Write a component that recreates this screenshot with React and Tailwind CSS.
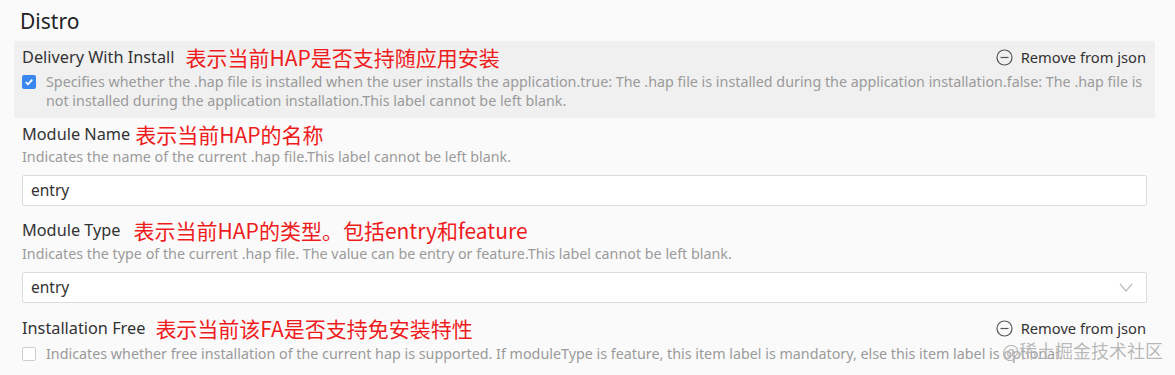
import React from 'react';

const font = { fontFamily: '"Noto Sans", "Noto Sans CJK SC", sans-serif' };

const MinusCircle = () => (
    <svg width="17" height="17" viewBox="0 0 17 17" fill="none" stroke="#555" strokeWidth="1.2">
        <circle cx="8.5" cy="8.5" r="7.5" />
        <line x1="4.5" y1="8.5" x2="12.5" y2="8.5" />
    </svg>
);

const Remove = () => (
    <div className="flex items-center gap-[8px] text-[14.7px] text-[#333] leading-[22px]">
        <MinusCircle />
        <span>Remove from json</span>
    </div>
);

const Label = ({ name, note, removable, nameGap = "ml-[7px]" }) => (
    <div className="flex items-center h-[22px] leading-[22px]">
        <span className="text-[16.3px] text-[#333]">{name}</span>
        <span className={`${nameGap} text-[21px] text-[#ee1c1c] font-['Noto_Sans_CJK_SC']`}>{note}</span>
        {removable && <div className="ml-auto pr-[1px]"><Remove /></div>}
    </div>
);

const Desc = ({ children, className = "" }) => (
    <div className={`text-[14.3px] leading-[19px] text-[#9a9a9a] ${className}`}>{children}</div>
);

const Checkbox = ({ checked }) => (
    checked ? (
        <div className="w-[14px] h-[14px] shrink-0 rounded-[2px] bg-[#3b87f0] flex items-center justify-center mt-[3px]">
            <svg width="10" height="10" viewBox="0 0 10 10" fill="none" stroke="white" strokeWidth="1.8">
                <polyline points="1.8,5.2 4,7.3 8.3,2.6" />
            </svg>
        </div>
    ) : (
        <div className="w-[14px] h-[14px] shrink-0 rounded-[2px] bg-white border border-[#cfcfcf] mt-[3px]" />
    )
);

export default function App() {
    return (
        <div className="relative w-[1175px] h-[375px] overflow-hidden bg-[#fafafa]" style={font}>
            <div className="pl-[20px] pt-[8px] h-[41px] text-[21px] leading-[26px] text-[#222]">Distro</div>

            <div className="ml-[14px] w-[1141px] bg-[#f0f0f0] pl-[8px] pr-[8px] pt-[5px] pb-[8px]">
                <Label name="Delivery With Install" note="表示当前HAP是否支持随应用安装" removable nameGap="ml-[11px]" />
                <div className="flex gap-[10px] mt-[4px]">
                    <Checkbox checked />
                    <Desc>
                        Specifies whether the .hap file is installed when the user installs the application.true: The .hap file is installed during the application installation.false: The .hap file is not installed during the application installation.This label cannot be left blank.
                    </Desc>
                </div>
            </div>

            <div className="pl-[22px] pr-[28px]">
                <div className="mt-[5px]">
                    <Label name="Module Name" note="表示当前HAP的名称" nameGap="ml-[5px]" />
                    <Desc className="mt-[2px]">Indicates the name of the current .hap file.This label cannot be left blank.</Desc>
                    <div className="mt-[9px] h-[31px] bg-white border border-[#dcdcdc] rounded-[2px] flex items-center pl-[8px] text-[15.5px] text-[#333]">entry</div>
                </div>

                <div className="mt-[13px]">
                    <Label name="Module Type" note="表示当前HAP的类型。包括entry和feature" nameGap="ml-[13px]" />
                    <Desc className="mt-[3px]">Indicates the type of the current .hap file. The value can be entry or feature.This label cannot be left blank.</Desc>
                    <div className="mt-[9px] h-[31px] bg-white border border-[#dcdcdc] rounded-[2px] flex items-center pl-[8px] pr-[13px] text-[15.5px] text-[#333]">
                        <span>entry</span>
                        <svg className="ml-auto" width="14" height="9" viewBox="0 0 14 9" fill="none" stroke="#bdbdbd" strokeWidth="1.2">
                            <polyline points="1,1 7,8 13,1" />
                        </svg>
                    </div>
                </div>

                <div className="mt-[14px]">
                    <Label name="Installation Free" note="表示当前该FA是否支持免安装特性" removable nameGap="ml-[10px]" />
                    <div className="flex gap-[10px] mt-[5px]">
                        <Checkbox />
                        <Desc className="whitespace-nowrap">
                            Indicates whether free installation of the current hap is supported. If moduleType is feature, this item label is mandatory, else this item label is optional.
                        </Desc>
                    </div>
                </div>
            </div>

            <div className="absolute left-[1002px] top-[337px] whitespace-nowrap text-[18px] leading-[26px] text-[#8a8a8a]/60 font-['Noto_Sans_CJK_SC'] [text-shadow:0_0_2px_rgba(255,255,255,0.9)]">
                @稀土掘金技术社区
            </div>
        </div>
    );
}
